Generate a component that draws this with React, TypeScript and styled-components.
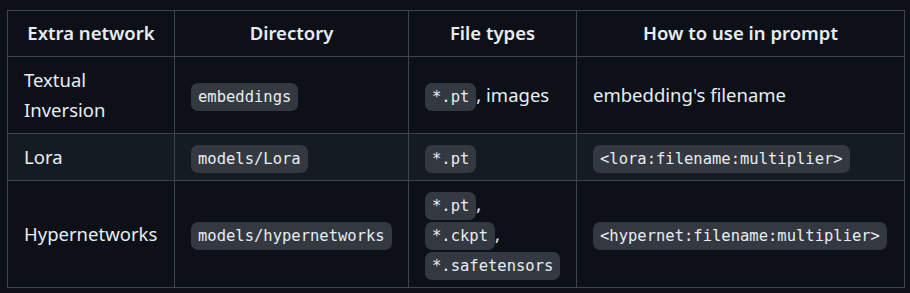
import styled, { createGlobalStyle } from 'styled-components';

const GlobalStyle = createGlobalStyle`
body {
  margin: 0;
  background: #0d1117;
  color: #e6edf3;
  font-family: "Noto Sans", "Open Sans", sans-serif;
}
`;

const Page = styled.div`
padding: 10px 0 0 7px;
`;

const Table = styled.table`
border-collapse: collapse;
table-layout: fixed;
width: 897px;
font-size: 18.5px;
line-height: 30px;
`;

const Th = styled.th<{ $w: number }>`
box-sizing: border-box;
width: ${p => p.$w}px;
border: 1px solid #3d444d;
padding: 7px 16px 8px;
font-weight: 600;
text-align: center;
`;

const Row = styled.tr<{ $alt?: boolean }>`
background: ${p => (p.$alt ? '#151b23' : '#0d1117')};
`;

const Td = styled.td`
border: 1px solid #3d444d;
padding: 8px 16px;
vertical-align: middle;
`;

const Code = styled.code`
font-family: "DejaVu Sans Mono", monospace;
font-size: 15.5px;
line-height: 1;
background: #343941;
border-radius: 7px;
padding: 5px 7px;
white-space: nowrap;
`;

const columns = [
  { title: 'Extra network', w: 167 },
  { title: 'Directory', w: 234 },
  { title: 'File types', w: 168 },
  { title: 'How to use in prompt', w: 328 },
];

export default function App() {
  return (
    <>
      <GlobalStyle />
      <Page>
        <Table>
          <thead>
            <tr>
              {columns.map(c => (
                <Th key={c.title} $w={c.w}>{c.title}</Th>
              ))}
            </tr>
          </thead>
          <tbody>
            <Row>
              <Td>Textual<br />Inversion</Td>
              <Td><Code>embeddings</Code></Td>
              <Td><Code>*.pt</Code>, images</Td>
              <Td>embedding's filename</Td>
            </Row>
            <Row $alt>
              <Td>Lora</Td>
              <Td><Code>models/Lora</Code></Td>
              <Td><Code>*.pt</Code></Td>
              <Td><Code>&lt;lora:filename:multiplier&gt;</Code></Td>
            </Row>
            <Row>
              <Td>Hypernetworks</Td>
              <Td><Code>models/hypernetworks</Code></Td>
              <Td>
                <Code>*.pt</Code>,<br />
                <Code>*.ckpt</Code>,<br />
                <Code>*.safetensors</Code>
              </Td>
              <Td><Code>&lt;hypernet:filename:multiplier&gt;</Code></Td>
            </Row>
          </tbody>
        </Table>
      </Page>
    </>
  );
}
